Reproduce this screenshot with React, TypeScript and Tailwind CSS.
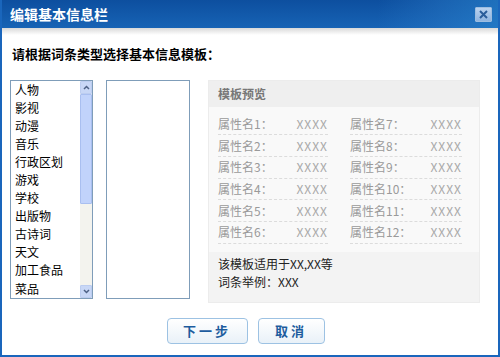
import React from "react";

const cats = ["人物", "影视", "动漫", "音乐", "行政区划", "游戏", "学校", "出版物", "古诗词", "天文", "加工食品", "菜品"];

const left = [1, 2, 3, 4, 5, 6];
const right = [7, 8, 9, 10, 11, 12];

const font = { fontFamily: '"Noto Sans CJK SC", "Liberation Sans", sans-serif' };

function AttrRow({ n }: { n: number }) {
  return (
    <div className="flex h-[21.7px] items-center justify-between border-b border-dashed border-[#dcdcdc] text-[12px] text-[#9a9a9a]">
      <span>属性名{n}：</span>
      <span className="tracking-[1px] text-[#a8a8a8]">XXXX</span>
    </div>
  );
}

export default function App() {
  return (
    <div className="flex h-[357px] w-[500px] flex-col overflow-hidden border-x-2 border-b-2 border-[#1a66bc] bg-white" style={font}>
      <div className="relative flex h-[28px] shrink-0 items-center bg-gradient-to-b from-[#0d4f9f] to-[#1763b5] pl-[8px]">
        <div className="absolute right-0 top-0 h-full w-[120px] bg-gradient-to-r from-transparent via-[#2a7bc8]/40 to-[#2a86cf]/60" />
        <span className="relative text-[14px] font-bold text-white">编辑基本信息栏</span>
        <div className="relative ml-auto mr-[6px] flex h-[15px] w-[17px] items-center justify-center rounded-[1px] border border-[#9cbde0] bg-gradient-to-b from-[#b9d2ef] to-[#8fb4df]">
          <svg width="9" height="9" viewBox="0 0 9 9">
            <path d="M1 1 L8 8 M8 1 L1 8" stroke="#2a5d9a" strokeWidth="2" />
          </svg>
        </div>
      </div>
      <div className="h-[7px] shrink-0 bg-gradient-to-b from-[#d9d9d9] to-white" />

      <div className="pl-[10px] pt-[9px] text-[13px] font-bold text-black">请根据词条类型选择基本信息模板：</div>

      <div className="mt-[16px] flex pl-[8px]">
        <div className="flex h-[219px] w-[83px] border border-[#7f9db9] bg-white">
          <div className="flex flex-1 flex-col pl-[4px] text-[12px] leading-[18.1px] text-black">
            {cats.map((c) => (
              <div key={c}>{c}</div>
            ))}
          </div>
          <div className="flex w-[12px] flex-col bg-[#f3f3ee]">
            <div className="flex h-[13px] items-center justify-center rounded-[1px] border border-[#bccdf0] bg-[#c8d7f6]">
              <svg width="7" height="5" viewBox="0 0 7 5">
                <path d="M1 4 L3.5 1.5 L6 4" stroke="#4d6185" strokeWidth="1.5" fill="none" />
              </svg>
            </div>
            <div className="h-[110px] rounded-[1px] border border-[#a9bff0] bg-[#c1d3fb]" />
            <div className="flex-1" />
            <div className="flex h-[13px] items-center justify-center rounded-[1px] border border-[#bccdf0] bg-[#c8d7f6]">
              <svg width="7" height="5" viewBox="0 0 7 5">
                <path d="M1 1 L3.5 3.5 L6 1" stroke="#4d6185" strokeWidth="1.5" fill="none" />
              </svg>
            </div>
          </div>
        </div>

        <div className="ml-[13px] h-[219px] w-[84px] border border-[#7f9db9] bg-white" />

        <div className="ml-[18px] flex h-[223px] w-[272px] flex-col border border-[#ececec] bg-[#f9f9f9]">
          <div className="flex h-[26px] items-center bg-[#efefef] pl-[9px] text-[12px] font-bold text-[#777]">模板预览</div>
          <div className="flex gap-[22px] px-[9px] pt-[7px]">
            <div className="flex w-[110px] flex-col">
              {left.map((n) => (
                <AttrRow key={n} n={n} />
              ))}
            </div>
            <div className="flex w-[112px] flex-col">
              {right.map((n) => (
                <AttrRow key={n} n={n} />
              ))}
            </div>
          </div>
          <div className="mt-[8px] flex flex-1 flex-col bg-[#f3f3f3] pl-[9px] pt-[3px] text-[12px] leading-[18px] text-[#222]">
            <div>该模板适用于XX,XX等</div>
            <div>词条举例：XXX</div>
          </div>
        </div>
      </div>

      <div className="mt-[15px] flex justify-center gap-[10px] pr-[9px]">
        <button className="h-[26px] w-[81px] rounded-[4px] border border-[#9dc2e3] bg-gradient-to-b from-white to-[#e9f1f8] text-[13px] font-bold tracking-[3px] text-[#1d5c9e]">
          下一步
        </button>
        <button className="h-[26px] w-[67px] rounded-[4px] border border-[#9dc2e3] bg-gradient-to-b from-white to-[#e9f1f8] text-[13px] font-bold tracking-[3px] text-[#1d5c9e]">
          取消
        </button>
      </div>
    </div>
  );
}
